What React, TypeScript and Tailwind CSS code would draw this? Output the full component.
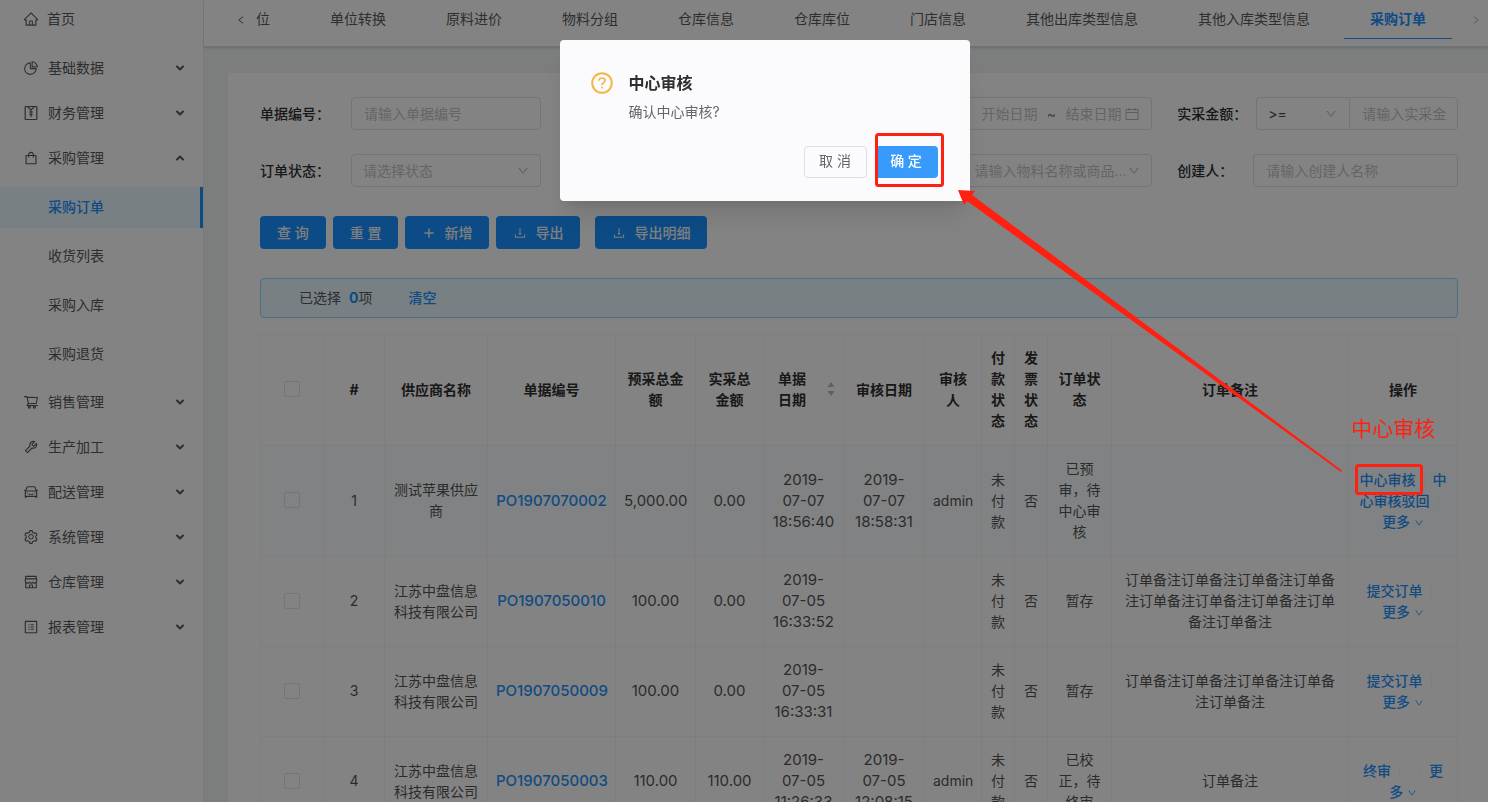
import React from "react";
import {
  AiOutlineHome,
  AiOutlinePieChart,
  AiOutlineShopping,
  AiOutlineShoppingCart,
  AiOutlineTool,
  AiOutlineCar,
  AiOutlineSetting,
  AiOutlineShop,
  AiOutlineProfile,
  AiOutlineLeft,
  AiOutlineRight,
  AiOutlineDown,
  AiOutlineDownload,
} from "react-icons/ai";
import { ChevronDown, ChevronUp, Plus } from "lucide-react";

type IconType = React.ComponentType<{ className?: string }>;

function LedgerIcon({ className }: { className?: string }) {
  return (
    <svg viewBox="0 0 16 16" className={className} fill="none" stroke="currentColor" strokeWidth="1.2">
      <rect x="2.200" y="1.500" width="11.600" height="13" rx="0.500" />
      <path d="M4.500 1.500 8 5l3.500-3.500M6 7h4M8 5.500V12M6.300 9.500h3.400" />
    </svg>
  );
}

function CalendarIcon({ className }: { className?: string }) {
  return (
    <svg viewBox="0 0 14 14" className={className} fill="none" stroke="currentColor">
      <path d="M1 2.500h12v10H1zM1 5.500h12M4 1v3M10 1v3" />
    </svg>
  );
}

interface MenuEntry {
  label: string;
  icon: IconType;
  children?: string[];
}

const menu: MenuEntry[] = [
  { label: "基础数据", icon: AiOutlinePieChart },
  { label: "财务管理", icon: LedgerIcon },
  { label: "采购管理", icon: AiOutlineShopping, children: ["采购订单", "收货列表", "采购入库", "采购退货"] },
  { label: "销售管理", icon: AiOutlineShoppingCart },
  { label: "生产加工", icon: AiOutlineTool },
  { label: "配送管理", icon: AiOutlineCar },
  { label: "系统管理", icon: AiOutlineSetting },
  { label: "仓库管理", icon: AiOutlineShop },
  { label: "报表管理", icon: AiOutlineProfile },
];

const tabs = ["单位转换", "原料进价", "物料分组", "仓库信息", "仓库库位", "门店信息", "其他出库类型信息", "其他入库类型信息", "采购订单"];

function Sidebar() {
  return (
    <aside className="w-51 shrink-0 border-r border-[#e8e8ea] bg-[#fdfbfd] text-[#585858]">
      <nav>
        <a href="#home" className="mb-2 flex h-10 items-center gap-2 pb-0.5 pl-[23px]">
          <AiOutlineHome className="size-4" />
          首页
        </a>
        <ul className="flex flex-col gap-1">
          {menu.map(({ label, icon: Icon, children }) => (
            <li key={label}>
              <button type="button" className="flex h-[41px] w-full items-center gap-2 pr-[17px] pb-0.5 pl-[23px]">
                <Icon className="size-4" />
                <span className="flex-1 pl-px text-left">{label}</span>
                {children ? <ChevronUp className="size-3" strokeWidth={4} /> : <ChevronDown className="size-3" strokeWidth={4} />}
              </button>
              {children && (
                <ul className="mt-2 mb-[3px] flex flex-col gap-2">
                  {children.map((child, i) => (
                    <li key={child}>
                      <a
                        href="#menu"
                        className={
                          i === 0
                            ? "flex h-[41px] items-center border-r-3 border-[#1890ff] bg-[#e6f5fd] pb-0.5 pl-12 font-medium text-[#1890ff]"
                            : "flex h-[41px] items-center pb-0.5 pl-12"
                        }
                      >
                        {child}
                      </a>
                    </li>
                  ))}
                </ul>
              )}
            </li>
          ))}
        </ul>
      </nav>
    </aside>
  );
}

function TabBar() {
  return (
    <header className="flex h-[47px] items-start border-b border-[#d8dadc] bg-[#fdfbfd] pl-8 text-[#585858] shadow-sm">
      <button type="button" aria-label="向左" className="flex h-10 w-3 items-center">
        <AiOutlineLeft className="size-2.5" />
      </button>
      <div role="tablist" className="flex flex-1 justify-end gap-2 overflow-hidden">
        <button type="button" role="tab" className="h-[39px] border-b border-transparent pr-[26px]">
          位
        </button>
        {tabs.map((tab) => (
          <button
            key={tab}
            type="button"
            role="tab"
            className={
              tab === "采购订单"
                ? "h-[39px] shrink-0 border-b border-[#1890ff] px-[26px] font-bold text-[#1890ff]"
                : "h-[39px] shrink-0 border-b border-transparent px-[26px]"
            }
          >
            {tab}
          </button>
        ))}
      </div>
      <button type="button" aria-label="向右" className="flex h-10 w-9 items-center justify-end pr-[7px] text-[#b0b0b0]">
        <AiOutlineRight className="size-2.5" />
      </button>
    </header>
  );
}

const boxClass =
  "h-[33px] w-full min-w-0 rounded border border-[#dcdee0] bg-transparent px-3 text-[#a8a8a8] placeholder:text-[#c2c2c2]";

function Field({ id, label, labelClass, children }: { id: string; label: string; labelClass: string; children: React.ReactNode }) {
  return (
    <div className="flex items-center">
      <label htmlFor={id} className={labelClass}>
        {label}
      </label>
      <div className="min-w-0 flex-1">{children}</div>
    </div>
  );
}

function SelectBox({ id, text, dark }: { id: string; text: string; dark?: boolean }) {
  return (
    <div className="relative">
      <select
        id={id}
        className={
          dark
            ? "h-[33px] w-full appearance-none rounded-l border border-r-0 border-[#dcdee0] bg-transparent px-[11px] text-[#4a4a4a]"
            : "h-[33px] w-full appearance-none rounded border border-[#dcdee0] bg-transparent pl-[11px] text-[#c2c2c2]"
        }
      >
        <option>{text}</option>
      </select>
      <AiOutlineDown className="pointer-events-none absolute top-[11px] right-3 size-3 text-[#b4b4b4]" />
    </div>
  );
}

function Filters() {
  const wide = "w-[91px] shrink-0 font-medium text-[#2e2e2e]";
  return (
    <form className="grid grid-cols-4 gap-x-[25px] gap-y-6">
      <Field id="no" label="单据编号：" labelClass={wide}>
        <input id="no" placeholder="请输入单据编号" className={boxClass} />
      </Field>
      <Field id="supplier" label="供应商：" labelClass={wide}>
        <input id="supplier" className={boxClass} />
      </Field>
      <Field id="start" label="单据日期：" labelClass={wide}>
        <div className="flex h-[33px] items-center rounded border border-[#dcdee0] pr-3 pl-[18px] text-[#b4b4b4]">
          <input id="start" placeholder="开始日期" className="w-14 min-w-0 bg-transparent placeholder:text-[#c2c2c2]" />
          <span className="w-7 text-center text-[#7a7a7a]">~</span>
          <input aria-label="结束日期" placeholder="结束日期" className="w-14 min-w-0 bg-transparent placeholder:text-[#c2c2c2]" />
          <CalendarIcon className="ml-auto size-3.5 shrink-0" />
        </div>
      </Field>
      <Field id="amountOp" label="实采金额：" labelClass="w-[79px] shrink-0 font-medium text-[#2e2e2e]">
        <div className="flex">
          <div className="w-[93px] shrink-0">
            <SelectBox id="amountOp" text=">=" dark />
          </div>
          <input
            aria-label="实采金额"
            placeholder="请输入实采金"
            className="h-[33px] w-full min-w-0 rounded-r border border-[#dcdee0] bg-transparent pl-3 placeholder:text-[#c2c2c2]"
          />
        </div>
      </Field>
      <Field id="status" label="订单状态：" labelClass={wide}>
        <SelectBox id="status" text="请选择状态" />
      </Field>
      <Field id="pay" label="付款状态：" labelClass={wide}>
        <input id="pay" className={boxClass} />
      </Field>
      <Field id="goods" label="物料名称：" labelClass={wide}>
        <SelectBox id="goods" text="请输入物料名称或商品..." />
      </Field>
      <Field id="creator" label="创建人：" labelClass="w-19 shrink-0 font-medium text-[#2e2e2e]">
        <input id="creator" placeholder="请输入创建人名称" className={boxClass} />
      </Field>
    </form>
  );
}

const primary = "flex h-[33px] items-center gap-2 rounded bg-[#1890ff] px-[17px] font-medium text-[#f4f4f4]";

function Toolbar() {
  return (
    <div className="mt-[29px] flex gap-[7px]">
      <button type="button" className={primary}>查 询</button>
      <button type="button" className={primary}>重 置</button>
      <button type="button" className={primary}>
        <Plus className="size-3.5" strokeWidth={2.5} />
        新增
      </button>
      <button type="button" className={primary}>
        <AiOutlineDownload className="size-3.5" />
        导出
      </button>
      <div className="pl-2">
        <button type="button" className={primary}>
          <AiOutlineDownload className="size-3.5" />
          导出明细
        </button>
      </div>
    </div>
  );
}

interface Row {
  supplier: string;
  no: string;
  planned: string;
  actual: string;
  date: string[];
  audit: string[];
  auditor: string;
  status: string;
  remark: string;
  actions: React.ReactNode;
}

function Split() {
  return <span className="mx-2 inline-block h-3 w-px bg-[#f2f2f2] align-middle" />;
}

function Act({ children }: { children: React.ReactNode }) {
  return (
    <a href="#action" className="font-medium text-[#2490f8]">
      {children}
    </a>
  );
}

function More() {
  return (
    <Act>
      更多 <AiOutlineDown className="inline size-2.5" />
    </Act>
  );
}

function SubmitActions() {
  return (
    <>
      <div className="whitespace-nowrap">
        <Act>提交订单</Act>
        <Split />
      </div>
      <More />
    </>
  );
}

const rows: Row[] = [
  {
    supplier: "测试苹果供应商",
    no: "PO1907070002",
    planned: "5,000.00",
    actual: "0.00",
    date: ["2019-", "07-07", "18:56:40"],
    audit: ["2019-", "07-07", "18:58:31"],
    auditor: "admin",
    status: "已预审，待中心审核",
    remark: "",
    actions: (
      <>
        <Act>中心审核</Act>
        <Split />
        <Act>中心审核驳回</Act>
        <Split />
        <More />
      </>
    ),
  },
  {
    supplier: "江苏中盘信息科技有限公司",
    no: "PO1907050010",
    planned: "100.00",
    actual: "0.00",
    date: ["2019-", "07-05", "16:33:52"],
    audit: [],
    auditor: "",
    status: "暂存",
    remark: "订单备注订单备注订单备注订单备注订单备注订单备注订单备注订单备注订单备注",
    actions: <SubmitActions />,
  },
  {
    supplier: "江苏中盘信息科技有限公司",
    no: "PO1907050009",
    planned: "100.00",
    actual: "0.00",
    date: ["2019-", "07-05", "16:33:31"],
    audit: [],
    auditor: "",
    status: "暂存",
    remark: "订单备注订单备注订单备注订单备注订单备注",
    actions: <SubmitActions />,
  },
  {
    supplier: "江苏中盘信息科技有限公司",
    no: "PO1907050003",
    planned: "110.00",
    actual: "110.00",
    date: ["2019-", "07-05", "11:26:33"],
    audit: ["2019-", "07-05", "12:08:15"],
    auditor: "admin",
    status: "已校正，待终审",
    remark: "订单备注",
    actions: (
      <>
        <Act>终审</Act>
        <Split /> <Split />
        <More />
      </>
    ),
  },
];

function Lines({ parts }: { parts: string[] }) {
  return (
    <>
      {parts.map((p) => (
        <span key={p} className="block whitespace-nowrap">
          {p}
        </span>
      ))}
    </>
  );
}

const th = "border border-[#eff2f0] px-2 pt-3 pb-3.5 font-bold text-[#303030]";
const td = "border border-[#eff2f0] px-2 pt-3 pb-3.5";
const num = "border border-[#eff2f0] px-2 pt-3 pb-3.5 text-[15px]";
const check = "mx-auto block size-4 appearance-none rounded-xs border border-[#e0e0e0]";

function OrderTable() {
  return (
    <table className="mt-4 w-full table-fixed border-collapse text-center leading-[21px] text-[#545454]">
      <colgroup>
        <col className="w-[63px]" />
        <col className="w-[61px]" />
        <col className="w-[103px]" />
        <col className="w-[128px]" />
        <col className="w-[80px]" />
        <col className="w-[68px]" />
        <col className="w-[80px]" />
        <col className="w-[81px]" />
        <col className="w-[57px]" />
        <col className="w-[33px]" />
        <col className="w-[33px]" />
        <col className="w-[64px]" />
        <col />
        <col className="w-[109px]" />
      </colgroup>
      <thead>
        <tr>
          <th className={th}>
            <input type="checkbox" aria-label="全选" className={check} />
          </th>
          <th className={th}>#</th>
          <th className={th}>供应商名称</th>
          <th className={th}>单据编号</th>
          <th className={th}>预采总金额</th>
          <th className={th}>实采总金额</th>
          <th className={th}>
            <div className="flex items-center justify-between pl-1.5">
              <span className="w-7">单据日期</span>
              <svg viewBox="0 0 8 14" className="h-3.5 w-2 fill-[#b8b8b8]">
                <path d="M4 0 7.500 5h-7zM4 14 .5 9h7z" />
              </svg>
            </div>
          </th>
          <th className={th}>审核日期</th>
          <th className={th}>审核人</th>
          <th className={th}>付款状态</th>
          <th className={th}>发票状态</th>
          <th className={th}>订单状态</th>
          <th className={th}>订单备注</th>
          <th className={th}>操作</th>
        </tr>
      </thead>
      <tbody>
        {rows.map((row, i) => (
          <tr key={row.no} className={i === 0 ? "bg-[#f5fafb]" : ""}>
            <td className={td}>
              <input type="checkbox" aria-label={row.no} className={check} />
            </td>
            <td className={td}>{i + 1}</td>
            <td className={td}>{row.supplier}</td>
            <td className={num}>
              <a href="#order" className="font-medium text-[#2490f8]">
                {row.no}
              </a>
            </td>
            <td className={num}>{row.planned}</td>
            <td className={num}>{row.actual}</td>
            <td className={num}>
              <Lines parts={row.date} />
            </td>
            <td className={num}>
              <Lines parts={row.audit} />
            </td>
            <td className={td}>{row.auditor}</td>
            <td className={td}>未付款</td>
            <td className={td}>否</td>
            <td className={td}>{row.status}</td>
            <td className={td}>{row.remark}</td>
            <td className={td}>{row.actions}</td>
          </tr>
        ))}
      </tbody>
    </table>
  );
}

function QuestionIcon() {
  return (
    <svg viewBox="0 0 22 22" className="size-[22px] shrink-0 text-[#f0b849]" fill="none" stroke="currentColor" strokeWidth="2">
      <circle cx="11" cy="11" r="9.800" />
      <path strokeWidth="1.700" d="M8 8.700C8 7 9.300 6 11 6s3 1 3 2.600c0 1.200-.7 1.900-1.700 2.400-.9.400-1.300.9-1.300 1.700v.6M11 14.800v1.800" />
    </svg>
  );
}

function ConfirmDialog() {
  return (
    <div className="fixed inset-0 z-10 flex items-start justify-center bg-black/48 pt-10 pl-[41px]">
      <div role="dialog" aria-modal="true" aria-labelledby="dialog-title" className="w-[410px] rounded bg-[#fbfafc] pt-8 pr-8 pb-[23px] pl-[31px] shadow-xl">
        <div className="flex gap-4">
          <QuestionIcon />
          <div>
            <h2 id="dialog-title" className="text-base leading-[22px] font-bold text-[#2e2e2e]">
              中心审核
            </h2>
            <p className="mt-2 leading-5 text-[#666666]">确认中心审核?</p>
          </div>
        </div>
        <div className="mt-6 flex justify-end gap-2">
          <button type="button" className="h-8 w-[63px] rounded border border-[#dedee0] pb-0.5 text-[#666666]">
            取 消
          </button>
          <button type="button" className="h-8 w-[63px] rounded bg-[#389bfb] pb-0.5 font-medium text-white">
            确 定
          </button>
        </div>
      </div>
    </div>
  );
}

function Annotations() {
  return (
    <div className="pointer-events-none fixed inset-0 z-20">
      <svg width="1488" height="802" viewBox="0 0 1488 802" className="block">
        <g fill="none" stroke="#ff2012" strokeWidth="3">
          <rect x="876.5" y="134.5" width="66" height="51" rx="2" />
          <rect x="1356.500" y="465.500" width="65" height="28" rx="2" />
        </g>
        <path fill="#ff2012" d="M958 190 975 191 972 195 1342 470.500 1341 472 967 201 964 205z" />
      </svg>
      <span className="absolute top-[414px] left-[1351px] text-[21px] leading-[30px] text-[#ff2012]">中心审核</span>
    </div>
  );
}

export default function App() {
  return (
    <div className="flex h-screen overflow-hidden bg-[#edeff0] font-[Inter,'Noto_Sans_CJK_SC',sans-serif] text-sm">
      <Sidebar />
      <div className="flex min-w-0 flex-1 flex-col">
        <TabBar />
        <main className="min-h-0 flex-1 overflow-hidden pt-[26px] pl-6">
          <section className="bg-[#fdfbfd] pt-6 pr-[30px] pb-6 pl-8">
            <Filters />
            <Toolbar />
            <div className="mt-[29px] flex h-10 items-center rounded border border-[#91d5ff] bg-[#e6f5fd] pl-[38px] text-[#585858]">
              已选择
              <span className="ml-2 font-bold text-[#1890ff]">0</span>项
              <button type="button" className="ml-9 font-medium text-[#1890ff]">
                清空
              </button>
            </div>
            <OrderTable />
          </section>
        </main>
      </div>
      <ConfirmDialog />
      <Annotations />
    </div>
  );
}
